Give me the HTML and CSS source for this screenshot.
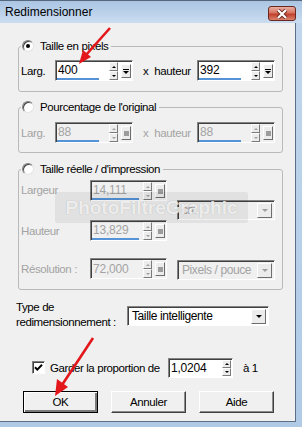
FILE: index.html
```html
<!DOCTYPE html>
<html>
<head>
    <title>Redimensionner</title>
    <link rel="stylesheet" href="styles.css">
</head>
<body>
<div class="window">
    <div class="titlebar">
        <span class="title">Redimensionner</span>
        <span class="close">
            <svg width="12" height="10" viewBox="0 0 12 10">
                <path d="M2 1L10 9M10 1L2 9" stroke="#6e2820" stroke-width="4" fill="none"/>
                <path d="M2 1L10 9M10 1L2 9" stroke="#fff" stroke-width="2.2" fill="none"/>
            </svg>
        </span>
    </div>

    <div class="client">
        <fieldset class="group g1">
            <legend><span class="leg"><span class="radio on"></span>Taille en pixels</span></legend>
            <div class="row">
                <span class="lbl-l">Larg.</span>
                <div class="field w78">
                    <span class="val">400</span><span class="fill"></span>
                    <span class="spin"><i class="up"></i><i class="dn"></i></span>
                    <span class="sq"></span>
                </div>
                <span class="mid">x<span class="ht">hauteur</span></span>
                <div class="field w78">
                    <span class="val">392</span><span class="fill"></span>
                    <span class="spin"><i class="up"></i><i class="dn"></i></span>
                    <span class="sq"></span>
                </div>
            </div>
        </fieldset>

        <fieldset class="group g2">
            <legend><span class="leg"><span class="radio"></span>Pourcentage de l'original</span></legend>
            <div class="row off">
                <span class="lbl-l">Larg.</span>
                <div class="field w78">
                    <span class="val">88</span><span class="fill"></span>
                    <span class="spin"><i class="up"></i><i class="dn"></i></span>
                    <span class="sq"></span>
                </div>
                <span class="mid">x<span class="ht">hauteur</span></span>
                <div class="field w78">
                    <span class="val">88</span><span class="fill"></span>
                    <span class="spin"><i class="up"></i><i class="dn"></i></span>
                    <span class="sq"></span>
                </div>
            </div>
        </fieldset>

        <fieldset class="group g3">
            <legend><span class="leg"><span class="radio"></span>Taille réelle / d'impression</span></legend>
            <div class="grid off">
                <span class="lbl r1">Largeur</span>
                <div class="field w77 r1">
                    <span class="val">14,111</span><span class="fill"></span>
                    <span class="spin"><i class="up"></i><i class="dn"></i></span>
                    <span class="sq"></span>
                </div>
                <div class="combo c-unit r2"><span class="ctext">cm</span><span class="arrow"></span></div>
                <span class="lbl r3">Hauteur</span>
                <div class="field w77 r3">
                    <span class="val">13,829</span><span class="fill"></span>
                    <span class="spin"><i class="up"></i><i class="dn"></i></span>
                    <span class="sq"></span>
                </div>
                <span class="lbl r5">Résolution :</span>
                <div class="field w77 r5 plain">
                    <span class="val">72,000</span><span class="fill"></span>
                    <span class="spin"><i class="up"></i><i class="dn"></i></span>
                    <span class="sq"></span>
                </div>
                <div class="combo c-unit c-res r5"><span class="ctext">Pixels / pouce</span><span class="arrow"></span></div>
            </div>
        </fieldset>

        <div class="type-row">
            <span class="type-lbl">Type de<br>redimensionnement :</span>
            <div class="combo c-type"><span class="ctext">Taille intelligente</span><span class="arrow"></span></div>
        </div>

        <div class="keep">
            <span class="check">
                <svg width="9" height="9" viewBox="0 0 9 9"><path d="M1 4.2L3.3 6.6L8 1.8" stroke="#000" stroke-width="2" fill="none"/></svg>
            </span>
            <span class="keep-lbl">Garder la proportion de</span>
            <div class="field w65 plain">
                <span class="val">1,0204</span><span class="fill"></span>
                <span class="spin"><i class="up"></i><i class="dn"></i></span>
            </div>
            <span class="ratio">à 1</span>
        </div>

        <div class="buttons">
            <span class="btn default">OK</span>
            <span class="btn">Annuler</span>
            <span class="btn">Aide</span>
        </div>
    </div>

    <div class="watermark">PhotoFiltreGraphic</div>

    <svg class="arrows" width="302" height="427" viewBox="0 0 302 427">
        <line x1="110" y1="28" x2="86" y2="55" stroke="#e3161b" stroke-width="2.6"/>
        <polygon points="79,64 91,57 83,50" fill="#e3161b"/>
        <line x1="93" y1="338" x2="62" y2="385" stroke="#e3161b" stroke-width="2.6"/>
        <polygon points="55,396 68,387 57,379" fill="#e3161b"/>
    </svg>
</div>
</body>
</html>
```

FILE: styles.css
```css
body {
    margin: 0;
    font-family: "Liberation Sans", Arial, sans-serif;
    font-size: 11.5px;
    letter-spacing: -0.4px;
    color: #000;
}

.window {
    position: relative;
    width: 302px;
    height: 427px;
    background: linear-gradient(#c2d7ee, #b0cae6);
    overflow: hidden;
}

.titlebar {
    height: 23px;
    box-sizing: border-box;
    border-top: 1px solid #55687e;
    display: flex;
    align-items: center;
    justify-content: space-between;
    padding: 0 6px 0 5px;
    background: linear-gradient(#aac5e3, #cadcf0);
}
.title {
    font-size: 12px;
    letter-spacing: 0;
}
.close {
    width: 28px;
    height: 15px;
    margin-top: 3px;
    box-sizing: border-box;
    border: 1px solid #6b2620;
    border-radius: 3px;
    background: linear-gradient(#e8b0a4, #d7735f 45%, #c23e2c 55%, #d9856f);
    display: flex;
    align-items: center;
    justify-content: center;
}

.client {
    width: 295px;
    height: 398px;
    background: #f0f0f0;
    border-right: 1px solid #5a6f86;
    border-bottom: 1px solid #5a6f86;
    overflow: hidden;
}

/* group boxes */
.group {
    margin: 0 0 0 18px;
    width: 265px;
    min-width: 0;
    box-sizing: border-box;
    border: 1px solid #bababa;
    border-radius: 3px;
    padding: 7px 0 10px 2px;
}
.group.g1 { margin-top: 16px; }
.group.g2 { margin-top: 8px; padding: 8px 0 9px 2px; }
.group.g3 { margin-top: 9px; padding: 4px 0 10px 2px; }

legend {
    padding: 0 3px 0 0;
    height: 14px;
}
.leg {
    display: flex;
    align-items: center;
    height: 14px;
}
.radio {
    position: relative;
    width: 12px;
    height: 12px;
    margin: 0 6px 0 1px;
    box-sizing: border-box;
    border-radius: 50%;
    border: 1px solid;
    border-color: #7e7e7e #e4e4e4 #e4e4e4 #7e7e7e;
    background: #fff;
    box-shadow: inset 1px 1px #454545;
}
.radio.on::after {
    content: "";
    position: absolute;
    left: 3px;
    top: 3px;
    width: 4px;
    height: 4px;
    border-radius: 50%;
    background: #000;
}

.row {
    display: flex;
    align-items: center;
    height: 21px;
}
.lbl-l { width: 34px; }
.mid {
    width: 64px;
    box-sizing: border-box;
    padding-left: 10px;
}
.ht { margin-left: 6px; }

.off { color: #a3a3a3; }

/* spin fields */
.field {
    display: flex;
    height: 21px;
    box-sizing: border-box;
    border: 1px solid;
    border-color: #848484 #fff #fff #848484;
    box-shadow: inset 1px 1px #404040;
    background: #fff;
    padding: 1px 1px 0 1px;
    font-size: 12px;
    letter-spacing: -0.2px;
}
.off .field { background: #f0f0f0; }
.w78 { width: 78px; }
.w77 { width: 77px; }
.field.w65 { width: 65px; height: 20px; padding-bottom: 1px; }
.val {
    width: 42px;
    display: flex;
    align-items: center;
    padding-left: 1px;
    box-sizing: border-box;
    border-bottom: 2px solid #5592d6;
}
.w77 .val { width: 47px; }
.plain .val { border-bottom: 0; }
.w65 .val { width: 50px; }
.fill { flex: 1; }
.spin {
    width: 9px;
    display: flex;
    flex-direction: column;
}
.spin i {
    flex: 1;
    display: flex;
    align-items: center;
    justify-content: center;
    box-sizing: border-box;
    border: 1px solid;
    border-color: #fff #7a7a7a #7a7a7a #fff;
    background: #ececec;
}
.spin .up::after {
    content: "";
    border-left: 2px solid transparent;
    border-right: 2px solid transparent;
    border-bottom: 2px solid #000;
}
.spin .dn::after {
    content: "";
    border-left: 2px solid transparent;
    border-right: 2px solid transparent;
    border-top: 2px solid #000;
}
.off .spin .up::after { border-bottom-color: #a0a0a0; }
.off .spin .dn::after { border-top-color: #a0a0a0; }

.sq {
    align-self: center;
    width: 10px;
    height: 14px;
    margin-left: 3px;
    box-sizing: border-box;
    border: 1px solid;
    border-color: #fff #6e6e6e #6e6e6e #fff;
    background: #ececec;
    display: flex;
    flex-direction: column;
    align-items: center;
    justify-content: center;
    gap: 1px;
}
.sq::before {
    content: "";
    width: 6px;
    height: 1px;
    background: #000;
}
.sq::after {
    content: "";
    border-left: 3px solid transparent;
    border-right: 3px solid transparent;
    border-top: 3px solid #000;
}
.off .sq::before {
    width: 5px;
    height: 5px;
    background: #9c9c9c;
}
.off .sq::after { display: none; }

/* real size grid */
.grid {
    display: grid;
    grid-template-columns: 69px 77px 10px 98px;
    grid-template-rows: 20px 20px 21px 17px 21px;
}
.grid .lbl { grid-column: 1; align-self: center; }
.grid .field { grid-column: 2; align-self: start; }
.r1 { grid-row: 1; }
.r2 { grid-row: 2; }
.r3 { grid-row: 3; }
.r5 { grid-row: 5; }

/* combos */
.combo {
    display: flex;
    align-items: center;
    height: 20px;
    box-sizing: border-box;
    border: 1px solid;
    border-color: #848484 #fff #fff #848484;
    box-shadow: inset 1px 1px #404040;
    background: #fff;
    padding: 1px 2px 1px 4px;
}
.ctext { flex: 1; }
.c-unit {
    grid-column: 4;
    background: #f0f0f0;
    font-size: 12px;
}
.c-res { margin-top: 2px; }
.arrow {
    width: 15px;
    height: 15px;
    box-sizing: border-box;
    border: 1px solid;
    border-color: #fff #6e6e6e #6e6e6e #fff;
    background: #ececec;
    display: flex;
    align-items: center;
    justify-content: center;
}
.arrow::after {
    content: "";
    border-left: 3px solid transparent;
    border-right: 3px solid transparent;
    border-top: 3px solid #000;
}
.c-unit .arrow::after { border-top-color: #a0a0a0; }

.type-row {
    display: flex;
    align-items: flex-start;
    margin-top: 10px;
}
.type-lbl {
    margin-left: 16px;
    width: 111px;
    line-height: 15px;
}
.c-type {
    width: 142px;
    margin-top: 6px;
    font-size: 12px;
}

/* keep ratio */
.keep {
    display: flex;
    align-items: center;
    height: 21px;
    margin-top: 27px;
}
.check {
    width: 13px;
    height: 13px;
    margin-left: 32px;
    box-sizing: border-box;
    border: 1px solid;
    border-color: #7e7e7e #fff #fff #7e7e7e;
    box-shadow: inset 1px 1px #404040;
    background: #fff;
    display: flex;
    align-items: center;
    justify-content: center;
}
.keep-lbl {
    width: 123px;
    box-sizing: border-box;
    padding-left: 5px;
}
.ratio { margin-left: 10px; }

/* buttons */
.buttons {
    display: flex;
    gap: 13px;
    margin: 13px 0 0 23px;
}
.btn {
    width: 75px;
    height: 22px;
    box-sizing: border-box;
    border: 1px solid;
    border-color: #fff #404040 #404040 #fff;
    box-shadow: inset -1px -1px #8a8a8a;
    background: #f0f0f0;
    display: flex;
    align-items: center;
    justify-content: center;
}
.btn.default {
    border-color: #000;
    box-shadow: inset 1px 1px #fff, inset -2px -2px #7a7a7a;
}

/* overlays */
.watermark {
    position: absolute;
    left: 55px;
    top: 192px;
    width: 193px;
    height: 31px;
    border-radius: 2px;
    background: rgba(0, 0, 0, 0.06);
    display: flex;
    align-items: center;
    justify-content: center;
    font-size: 19px;
    font-weight: bold;
    letter-spacing: 0;
    color: rgba(255, 255, 255, 0.8);
    text-shadow: 0 0 1px rgba(0, 0, 0, 0.25);
}
.arrows {
    position: absolute;
    left: 0;
    top: 0;
    pointer-events: none;
}
```
